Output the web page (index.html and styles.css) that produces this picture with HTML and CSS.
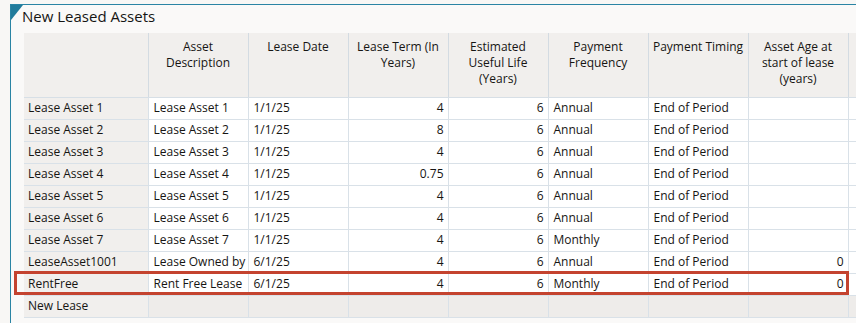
FILE: index.html
```html
<!DOCTYPE html>
<html>
<head>
<meta charset="utf-8">
<link rel="stylesheet" href="styles.css">
</head>
<body>
<div class="panel">
  <span class="corner"></span>
  <div class="title">New Leased Assets</div>
  <table class="grid">
    <colgroup>
      <col class="c-rh"><col class="c"><col class="c"><col class="c"><col class="c"><col class="c"><col class="c"><col class="c"><col class="c">
    </colgroup>
    <thead>
      <tr>
        <th class="corner-cell"></th>
        <th>Asset Description</th>
        <th>Lease Date</th>
        <th>Lease Term (In Years)</th>
        <th>Estimated Useful Life (Years)</th>
        <th>Payment Frequency</th>
        <th>Payment Timing</th>
        <th>Asset Age at start of lease (years)</th>
        <th></th>
      </tr>
    </thead>
    <tbody>
      <tr><th class="rh">Lease Asset 1</th><td>Lease Asset 1</td><td>1/1/25</td><td class="n">4</td><td class="n">6</td><td>Annual</td><td>End of Period</td><td class="n"></td><td></td></tr>
      <tr><th class="rh">Lease Asset 2</th><td>Lease Asset 2</td><td>1/1/25</td><td class="n">8</td><td class="n">6</td><td>Annual</td><td>End of Period</td><td class="n"></td><td></td></tr>
      <tr><th class="rh">Lease Asset 3</th><td>Lease Asset 3</td><td>1/1/25</td><td class="n">4</td><td class="n">6</td><td>Annual</td><td>End of Period</td><td class="n"></td><td></td></tr>
      <tr><th class="rh">Lease Asset 4</th><td>Lease Asset 4</td><td>1/1/25</td><td class="n">0.75</td><td class="n">6</td><td>Annual</td><td>End of Period</td><td class="n"></td><td></td></tr>
      <tr><th class="rh">Lease Asset 5</th><td>Lease Asset 5</td><td>1/1/25</td><td class="n">4</td><td class="n">6</td><td>Annual</td><td>End of Period</td><td class="n"></td><td></td></tr>
      <tr><th class="rh">Lease Asset 6</th><td>Lease Asset 6</td><td>1/1/25</td><td class="n">4</td><td class="n">6</td><td>Annual</td><td>End of Period</td><td class="n"></td><td></td></tr>
      <tr><th class="rh">Lease Asset 7</th><td>Lease Asset 7</td><td>1/1/25</td><td class="n">4</td><td class="n">6</td><td>Monthly</td><td>End of Period</td><td class="n"></td><td></td></tr>
      <tr><th class="rh">LeaseAsset1001</th><td>Lease Owned by</td><td>6/1/25</td><td class="n">4</td><td class="n">6</td><td>Annual</td><td>End of Period</td><td class="n">0</td><td></td></tr>
      <tr><th class="rh">RentFree</th><td>Rent Free Lease</td><td>6/1/25</td><td class="n">4</td><td class="n">6</td><td>Monthly</td><td>End of Period</td><td class="n">0</td><td></td></tr>
      <tr class="new"><th class="rh">New Lease</th><td></td><td></td><td></td><td></td><td></td><td></td><td></td><td></td></tr>
    </tbody>
  </table>
  <div class="highlight"></div>
</div>
</body>
</html>
```

FILE: styles.css
```css
html, body {
  margin: 0;
  padding: 0;
  background: #f8f7f5;
  overflow: hidden;
}
body {
  font-family: "Open Sans", "Noto Sans", sans-serif;
  color: #161513;
  width: 856px;
  height: 323px;
}
.panel {
  position: relative;
  margin: 4px 0 0 10px;
  border-top: 1px solid #2a84a4;
  border-left: 1px solid #2a84a4;
  background: #faf9f8;
  height: 318px;
  overflow: hidden;
  padding-left: 13px;
}
.corner {
  position: absolute;
  top: 0;
  left: 0;
  width: 0;
  height: 0;
  border-top: 15px solid #217b9b;
  border-right: 12px solid transparent;
}
.title {
  height: 28px;
  box-sizing: border-box;
  padding-top: 1px;
  margin-left: -2px;
  font-size: 15px;
  line-height: 20px;
  color: #161513;
}
.grid {
  border-collapse: collapse;
  table-layout: fixed;
  width: 924px;
  font-size: 12px;
}
.c-rh { width: 124px; }
.c { width: 100px; }
.grid thead th {
  height: 64px;
  box-sizing: border-box;
  background: #f1efed;
  font-weight: normal;
  vertical-align: top;
  text-align: center;
  padding: 6px 3px 0;
  line-height: 16px;
  border-left: 1px solid #d3dbe2;
  border-bottom: 1px solid #d7dfe6;
}
.grid thead th.corner-cell {
  border-left: none;
}
.grid tbody td, .grid tbody th {
  height: 22px;
  box-sizing: border-box;
  padding: 0 5px;
  line-height: 20px;
  white-space: nowrap;
  overflow: hidden;
  border-bottom: 1px solid #d9e1e8;
  border-left: 1px solid #d9e1e8;
  background: #ffffff;
  text-align: left;
  font-weight: normal;
}
.grid tbody th.rh {
  background: #f1efed;
  border-left: none;
  padding-left: 4px;
}
.grid tbody td.n {
  text-align: right;
  padding-right: 4px;
}
.grid tbody tr.new td {
  background: #eeecea;
}
.highlight {
  position: absolute;
  left: 3px;
  top: 266px;
  width: 835px;
  height: 24px;
  box-sizing: border-box;
  border: 3px solid #c4432f;
  pointer-events: none;
}
```
